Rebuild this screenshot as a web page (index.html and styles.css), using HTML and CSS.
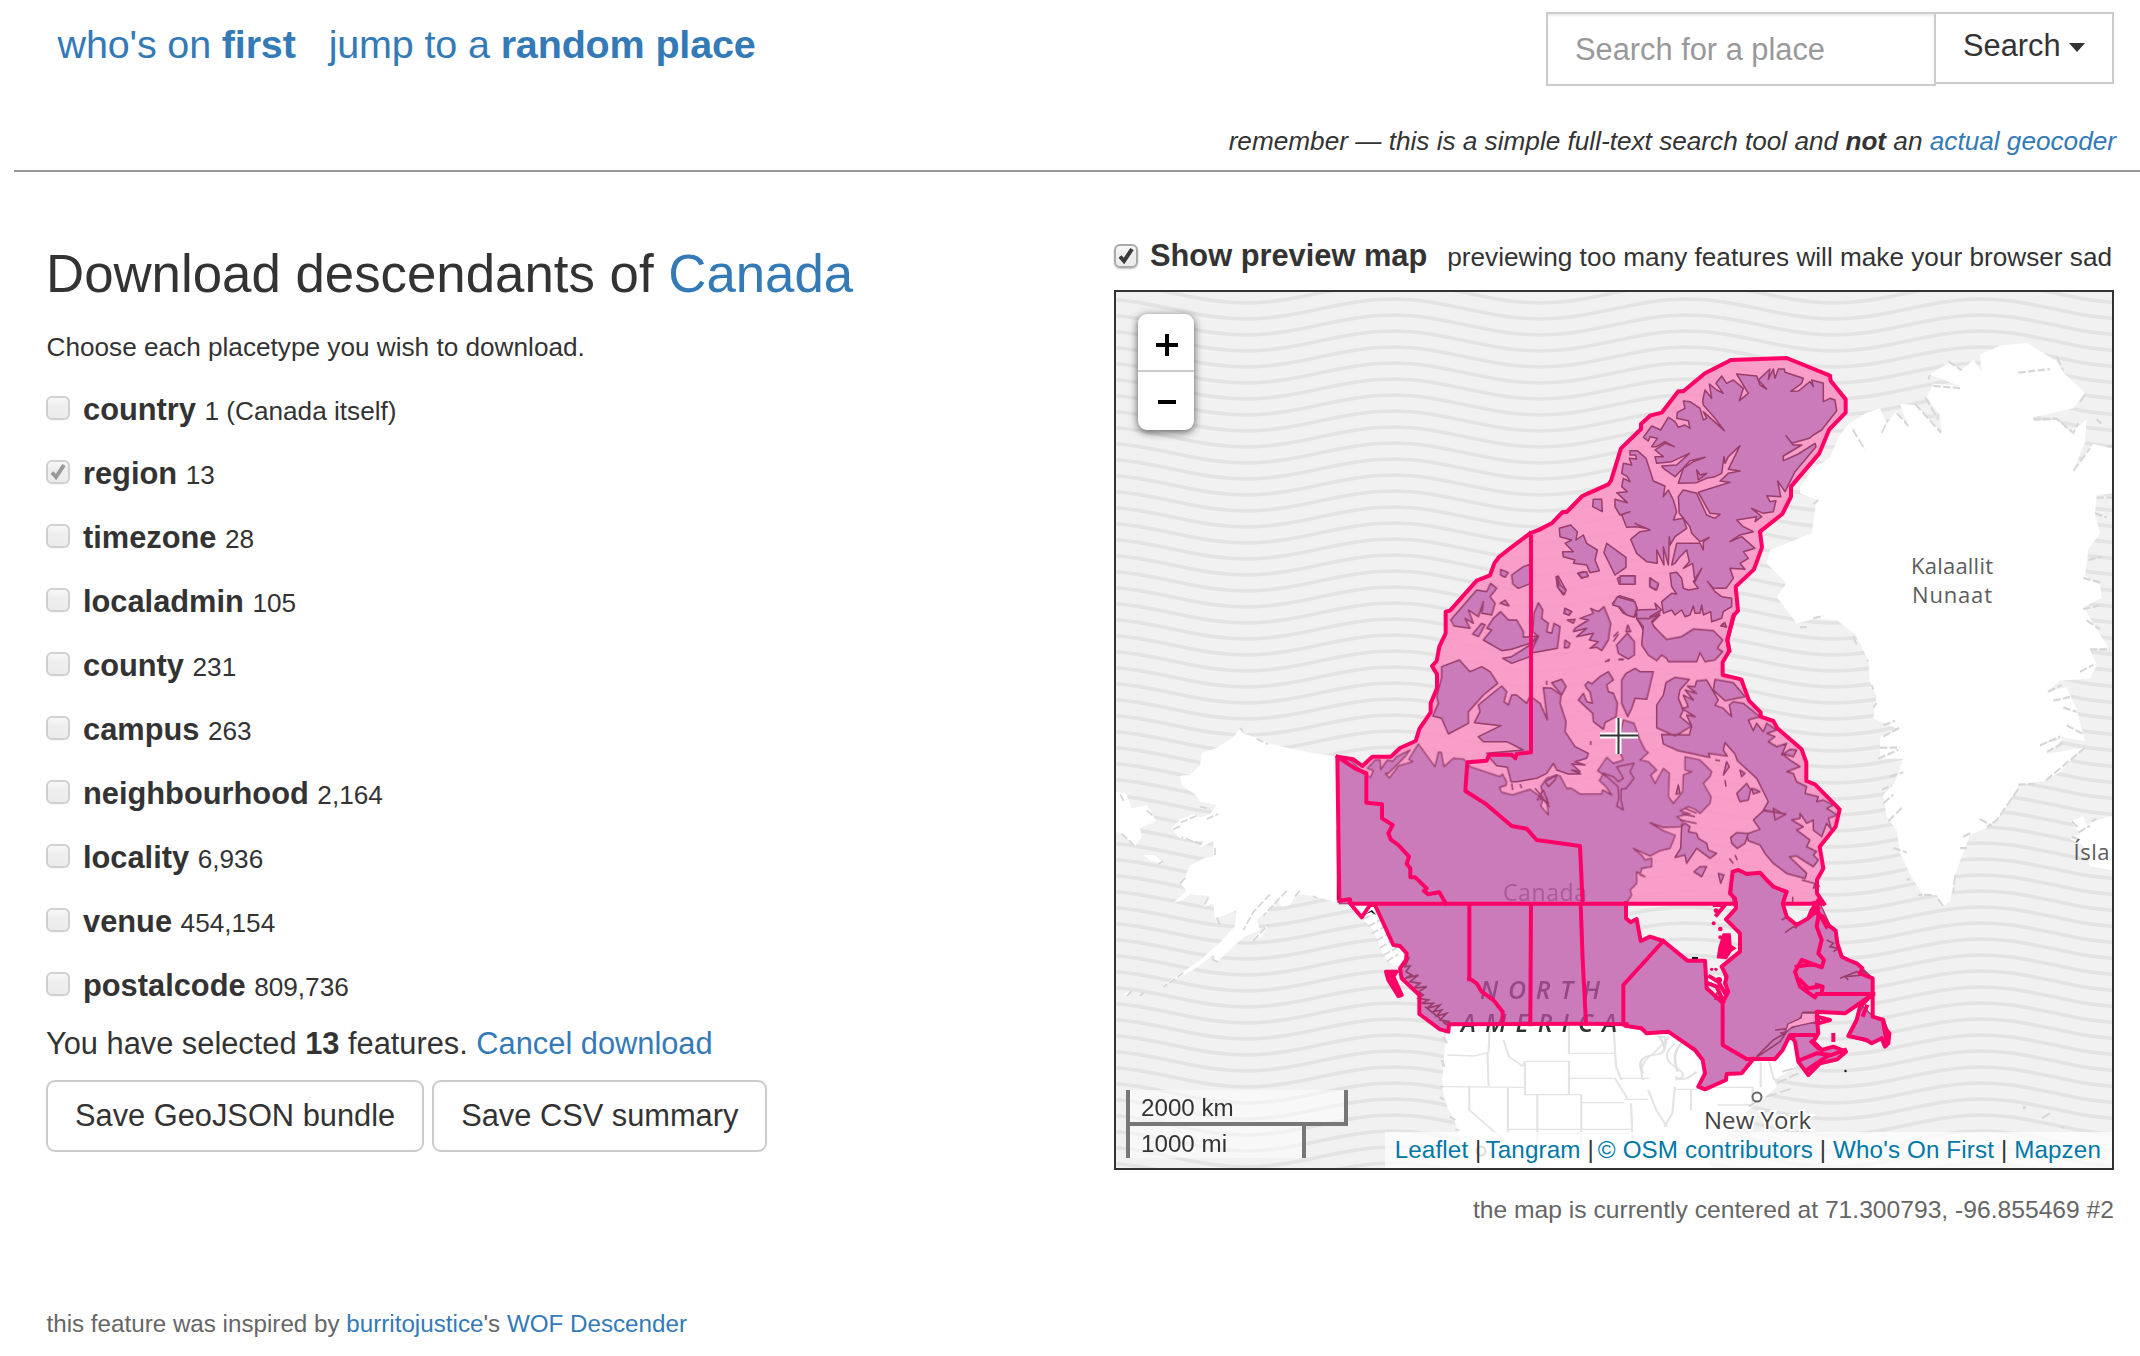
FILE: index.html
```html
<!DOCTYPE html>
<html lang="en">
<head>
<meta charset="utf-8">
<title>Download descendants of Canada</title>
<link rel="stylesheet" href="styles.css">
</head>
<body>
<header class="site-header">
  <nav class="site-nav">
    <a href="#">who's on <strong>first</strong></a>
    <a href="#">jump to a <strong>random place</strong></a>
  </nav>
  <div class="search">
    <form class="search-form">
      <input class="search-input" type="text" placeholder="Search for a place">
      <button class="search-button" type="button">Search<span class="caret"></span></button>
    </form>
    <p class="search-note">remember — this is a simple full-text search tool and <strong>not</strong> an <a href="#">actual geocoder</a></p>
  </div>
</header>

<main class="columns">
  <section class="download">
    <h1>Download descendants of <a href="#">Canada</a></h1>
    <p class="hint">Choose each placetype you wish to download.</p>
    <ul class="placetypes">
      <li><span class="box"></span><label><b>country</b> <small>1 (Canada itself)</small></label></li>
      <li><span class="box checked"><svg viewBox="0 0 24 24"><path d="M6 12.500l4 4.500L18 5"/></svg></span><label><b>region</b> <small>13</small></label></li>
      <li><span class="box"></span><label><b>timezone</b> <small>28</small></label></li>
      <li><span class="box"></span><label><b>localadmin</b> <small>105</small></label></li>
      <li><span class="box"></span><label><b>county</b> <small>231</small></label></li>
      <li><span class="box"></span><label><b>campus</b> <small>263</small></label></li>
      <li><span class="box"></span><label><b>neighbourhood</b> <small>2,164</small></label></li>
      <li><span class="box"></span><label><b>locality</b> <small>6,936</small></label></li>
      <li><span class="box"></span><label><b>venue</b> <small>454,154</small></label></li>
      <li><span class="box"></span><label><b>postalcode</b> <small>809,736</small></label></li>
    </ul>
    <p class="selected">You have selected <strong>13</strong> features. <a href="#">Cancel download</a></p>
    <div class="actions">
      <button class="btn" type="button">Save GeoJSON bundle</button>
      <button class="btn" type="button">Save CSV summary</button>
    </div>
    <p class="credit">this feature was inspired by <a href="#">burritojustice</a>'s <a href="#">WOF Descender</a></p>
  </section>

  <section class="preview">
    <div class="preview-toggle"><span class="box active"><svg viewBox="0 0 24 24"><path d="M6 12.500l4 4.500L18 5"/></svg></span><b>Show preview map</b><small>previewing too many features will make your browser sad</small></div>
    <div class="map">
      <svg class="map-canvas" viewBox="1116 292 996 876" width="996" height="876">
        <defs>
          <pattern id="waves" patternUnits="userSpaceOnUse" x="1099" y="303" width="294" height="16">
            <g fill="none" stroke="#e3e3e3" stroke-width="3.600">
              <path d="M0-36C53-36 94-16 147-16S241-36 294-36"/>
              <path d="M0-20C53-20 94 0 147 0S241-20 294-20"/>
              <path d="M0-4C53-4 94 16 147 16S241-4 294-4"/>
              <path d="M0 12C53 12 94 32 147 32S241 12 294 12"/>
              <path d="M0 28C53 28 94 48 147 48S241 28 294 28"/>
            </g>
          </pattern>
          <g id="mainland">
            <path transform="translate(1330 560) scale(.33333)" d="M22 590L60 598 100 640 122 652 130 632 112 625 135 600 150 600 152 628 172 600 188 604 200 590 240 570 225 590 175 640 166 640 178 654 205 618 248 605 236 598 265 552 315 620 325 577 334 577 342 620 370 595 400 597 412 607 420 620 510 650 517 642 530 665 528 676 508 682 515 697 547 705 600 688 628 708 622 720 640 715 632 738 655 765 650 715 640 705 632 680 650 655 680 645 690 648 710 685 725 685 750 702 815 702 818 690 845 705 828 680 808 662 820 640 850 650 865 665 880 655 860 620 912 610 900 635 912 655 888 685 873 688 873 720 880 750 860 738 866 715 864 680 830 650 803 632 830 592 850 610 880 600 862 560 880 480 912 490 930 540 945 570 955 578 930 600 955 605 980 630 962 645 975 670 1000 625 1018 640 1015 710 1030 730 1058 695 1060 645 1085 635 1065 630 1065 590 1110 600 1145 635 1140 650 1120 670 1143 710 1140 730 1110 760 1095 748 1075 740 1050 752 1080 762 1040 770 1060 785 1052 800 1000 802 960 788 1000 812 1036 826 1020 865 990 872 960 888 910 865 935 885 945 900 965 895 965 920 935 925 930 945 945 950 920 935 920 970 900 990 905 1005 888 1031 28 1031z"/>
            <path transform="translate(1330 860) scale(.33333)" d="M135 130L190 255 210 258 230 280 228 300 210 325 215 355 268 405 268 462 330 508 355 515 357 493 768 491 880 493 922 503 950 520 1015 515 1095 570 1118 600 1125 640 1105 680 1125 688 1188 660 1190 642 1235 640 1270 597 1335 602 1358 570 1375 525 1460 520 1460 455 1545 460 1630 402 1628 355 1597 325 1580 310 1545 298 1528 270 1517 212 1500 195 1470 130 1460 130 1435 175 1400 195 1370 170 1358 130 1365 95 1330 80 1290 38 1250 42 1225 30 1208 35 1205 105 1215 145 1188 178 1230 220 1230 275 1175 320 1190 370 1195 400 1178 428 1130 385 1125 302 1072 302 1000 243 960 230 932 243 920 177 902 187 888 175 888 130z"/>
            <path transform="translate(1600 860) scale(.33333)" d="M575 522L648 522 636 550 665 570 700 560 738 575 712 598 660 610 625 645 595 605 585 545zM748 528L770 470 790 440 820 470 850 475 868 520 860 558 845 535 815 550z"/>
          </g>
        </defs>

        <rect x="1116" y="292" width="996" height="876" fill="#f1f1f1"/>
        <rect x="1116" y="292" width="996" height="876" fill="url(#waves)"/>

        <!-- Alaska and the Bering coast -->
        <g transform="translate(1100 680) scale(.33333 .35714)">
          <path class="land" d="M720 215L640 205 560 190 500 175 480 165 430 150 420 135 400 160 350 190 305 205 300 240 270 265 240 268 245 295 285 320 300 340 350 350 330 375 300 385 280 375 240 390 215 415 235 440 270 450 310 452 300 470 340 450 340 495 310 500 270 520 245 575 260 590 220 625 250 615 270 600 330 605 310 635 340 625 345 670 370 660 410 645 405 690 360 735 300 785 190 855 280 812 340 770 350 790 430 720 480 700 470 670 510 645 530 610 545 635 570 630 590 600 640 605 700 620 760 640 820 700 850 770 880 800 900 800 920 760 840 600z"/>
          <path class="land" d="M40 310L80 320 95 360 140 350 170 395 120 415 125 440 105 465 65 430 50 425 40 440zM130 490L165 490 190 515 150 505zM460 725L505 685 485 720zM70 880L90 870 80 884z"/>
          <path class="coast" d="M430 145l-10-10M470 165l35 15M325 610l-15 25M240 410l-25 10M320 390l35-15M300 355l30 5M510 600l-50 50-30 50M560 590l-70 70M600 590l-20 20M355 790l-20-8M460 730l45-45M250 820l-60 40M350 665l10 20M290 380l-50 20M305 460l-60-20M345 470v20M80 885l20-20M120 885l10-10M60 320l15 25M140 365l25 20M65 430l40 35M175 515l15-8M790 670l40-20M805 690l40-20M815 710l40-20M830 730l35-20M840 750l35-20M850 770l40-20M860 788l35-20M640 605l10 5M240 570l20-20"/>
        </g>
        <!-- Greenland and Iceland -->
        <g transform="translate(1800 290) scale(.33333 .44643)">
          <path class="land" d="M0 440L40 400 90 375 115 330 145 300 200 275 240 265 260 300 290 270 325 305 300 255 350 258 400 300 425 320 420 280 380 240 400 210 480 215 390 190 450 160 480 180 500 170 520 155 545 185 540 145 600 125 680 118 770 160 790 185 855 230 820 265 700 285 705 295 770 290 810 320 860 290 855 340 820 405 880 345 936 355 936 455 890 460 885 500 900 545 865 580 855 640 900 660 905 690 850 710 890 760 925 800 870 805 890 840 870 870 780 875 740 900 800 890 830 940 855 1010 780 1000 715 1020 790 1005 740 1040 850 1025 780 1080 730 1100 655 1110 610 1170 560 1205 510 1220 490 1260 465 1310 450 1370 430 1380 410 1355 370 1355 330 1310 300 1260 290 1210 260 1180 250 1130 280 1110 310 1050 240 1050 240 1000 300 985 220 960 230 910 210 880 205 830 165 770 110 740 50 735 -10 747 -70 687 -40 657 -100 612 -90 582 35 545 50 470 0 455z"/>
          <path class="land" d="M810 1190L850 1178 860 1200 880 1190 936 1178 936 1300 870 1290 850 1245 810 1230 840 1218z"/>
          <path class="coast" d="M158 312L195 358M245 320l20-30M290 275l35 30M345 255l78 65M375 240l40 50M390 190l-5 10M445 160l40 20M400 215l85 5M655 185l95-8M700 290l70-2 50 32 15-22M820 405l50-50M890 465h46M885 500l35 10M865 605l40-8M850 645l50 10M850 715l45-8M860 740l40 20M870 805l60 0M840 855l40-15M745 900l40-15M760 920l60-10M790 935l40 10M720 1020l60-20M740 1035l50-20M800 975l50 20M855 1025l-120 75M655 1108l50-2M655 1118l-65 70-30 15M540 1185l35 15M490 1225l25-10M500 1250l-20 0M465 1310l-5 40M430 1380l-20-20M395 1355l-40 0M320 1320l10 0M280 1250l40 10M265 1190l40-30M250 1150l30-20M245 1120l30-10M270 1090l40-10M235 1050l60-20M240 1025l60 0M250 1000l50-20M250 975l35-10M220 935l10-10M215 885l5 10M200 830l5 0M40 735l30-5M160 775l10 20M0 755h20M55 470l-15 10M890 290l15 10M920 350h15M770 150l20 30M855 235l-20 20M815 1190l20 15M835 1215l35-15M875 1190l15-5M815 1225l20 5"/>
        </g>
        <!-- United States with its state lines -->
        <g transform="translate(1300 1000) scale(.53571 .33333)">
          <path class="land" d="M275 75L268 180 265 262 275 320 288 360 300 420 330 504H770L755 465 800 405 830 340 870 290 890 260 885 240 925 200 940 120 975 60z"/>
          <path class="state" d="M275 165L325 168 350 158 352 258M352 158L354 75M268 260L420 262M316 262V330L388 430M388 262V400M380 120L390 170 415 198 420 184 502 184V284H420V184M502 75V160H588M502 235H588L612 298M420 284H525V388H388M443 284V388M525 308H605M585 75L590 200 600 240M600 235H652M605 298H650M525 388H620L618 310M640 240Q630 190 660 160L690 110M700 130Q670 170 700 200T700 240M650 270L665 330 685 380M700 260L695 340 680 380M698 268H740L775 240M730 270V330M775 262H845V315H780M860 185V262M875 180L885 240M388 430V470H443V388M525 388V470M620 388V460H760M443 400H620"/>
          <path class="coast" d="M268 110l6 20M265 180l4 20M262 260l6 0M262 290l6 10M280 350l10 10M290 390l8 0M838 320l20-20M870 290l50-25M890 250l40-30M900 215l20-10M1352 318v10M1385 355l15-15M1422 380l3 5M860 340l10-5"/>
          <path class="lake" d="M640 220Q625 170 660 165T670 110Q690 110 680 140M705 215Q690 150 720 120T740 170M700 230Q715 250 740 215"/>
        </g>

        <g class="label">
          <text x="1911" y="574" font-size="22" textLength="82">Kalaallit</text>
          <text x="1912" y="603" font-size="22" textLength="80">Nunaat</text>
          <text x="2073.500" y="860" font-size="22" textLength="36">Ísla</text>
          <text class="city" x="1704" y="1129" font-size="24" textLength="107">New York</text>
          <circle cx="1757" cy="1097" r="4.500" fill="#fff" stroke="#666" stroke-width="2"/>
          <circle cx="1481" cy="1151" r="4.500" fill="#fff" stroke="#888" stroke-width="2"/>
        </g>

        <!-- Territorial waters of the three territories -->
        <g class="water">
          <path transform="translate(1330 560) scale(.33333)" d="M22 590L70 598 97 618 127 590H183L210 564 257 543 268 507 302 457V430L321 385V343L306 318 320 303 328 260 347 220V155L360 152 440 62 480 46 493 10 507-9 540-35 600-80 630-92H1100V1031H60L28 1022z"/>
          <path transform="translate(1540 330) scale(.33333)" d="M-30 618L35 580 68 546H80L127 498 205 463 213 452 243 355 303 297V282L330 257 365 248 415 184H430L495 130 573 90 740 84 870 137 872 152 917 208V248L868 298 838 370 753 470V500L727 552 660 605 666 652 642 718 587 770 594 842 580 858 562 930 0 930z"/>
          <path transform="translate(1600 600) scale(.33333)" d="M414 20L412 38 402 45 382 120 388 152 368 187V225L424 238 447 302 482 337V350L520 363 532 385 605 448 619 487V543L645 553 719 628 707 680 659 740 670 805 651 840V880L668 911H0V0z"/>
        </g>

        <use href="#mainland" fill="#fff"/>
        <g class="label">
          <text x="1503" y="901" font-size="23" textLength="84" fill="#777">Canada</text>
          <text class="continent" x="1480" y="999" textLength="120">NORTH</text>
          <text class="continent" x="1461" y="1032" textLength="156">AMERICA</text>
        </g>
        <use href="#mainland" class="provinces"/>

        <!-- Ellesmere, Axel Heiberg, Devon and neighbours -->
        <g class="island" transform="translate(1540 330) scale(.33333)">
          <path d="M488 212L495 180 515 205 508 162 530 180 550 190 528 160 545 138 560 160 580 150 610 175 598 212 625 190 590 132 650 138 660 165 680 177 655 150 690 117 685 148 700 117 705 145 715 117H733L735 127 790 145 785 160 752 184 775 183 810 155 820 170 815 150 850 160V215L870 205 885 210 890 242 845 300 820 315 808 325 755 340 738 317 760 345 785 345 730 378V392L775 372 825 340 828 350 765 425 735 485 713 453 722 500 680 497 690 515 708 512 700 545 670 550 635 535 665 560 645 575 650 560 590 570 610 590 640 605 600 615 570 635 605 620 645 655 610 665 625 685 600 700 615 718 570 715 580 745 558 775 520 775 503 755 525 785 545 800 575 805 575 830 550 845 545 865 515 875 512 845 490 855 485 825 480 850 465 850 460 828 450 855 435 860 425 840 405 855 395 840 370 850 365 815 395 790 410 792 395 770 390 730 410 727 425 745 430 775 445 780 475 775 460 755 485 715 465 755 458 700 430 715 448 695 440 660 420 680 405 700 395 705 410 640 480 640 490 660 490 635 508 622 480 635 455 610 450 590 418 550 415 500 430 480 470 490 500 555 525 565 540 553 510 550 475 487 570 457 540 453 565 430 600 423 565 418 600 347 565 380 555 400 552 380 545 430 525 440 500 445 470 458 415 460 430 415 460 395 495 382 450 392 405 440 370 415 365 408 410 405 448 370 395 395 350 400 345 380 370 380 345 360 375 340 403 350 375 335 350 350 335 350 352 325 330 320 325 333 310 322 335 288 362 300 385 262 405 275 415 292 435 285 450 295 445 272 410 265 412 247 435 235 430 213 450 215 480 235 490 270 500 265 490 245 553 302 525 265 490 225z"/>
          <path d="M270 362L292 362 318 385 340 453 375 468 370 500 385 480 400 510 410 545 400 570 430 565 440 595 405 620 390 645 388 620 385 705 370 650 372 705 350 660 352 700 320 695 290 670 272 628 300 605 330 600 285 580 315 595 290 590 260 592 245 555 270 545 240 555 225 530V508L262 518 230 488 262 485 245 470 250 445 270 455 262 440 245 430 250 400 275 405 268 385 290 387 287 375 270 375z"/>
          <path d="M470 420L480 435 500 430 475 450zM160 508L185 508 187 545 158 530zM58 595L92 585 112 605 108 630 130 615 140 640 172 660 165 690 178 722 150 728 140 705 100 700 105 690 70 680 68 665 100 665 75 640 95 630 60 620zM200 640L258 682V712L225 735 192 668zM113 730L130 725 145 737 125 745zM48 740L55 738 78 780 70 795 52 770zM232 745L250 737H285V763H238zM330 743L355 765 345 780 330 770zM218 820L238 797 280 810 292 835 285 860 250 850 235 830zM290 840L350 838 345 820 365 840 330 860 360 855 335 880 350 900H310L290 865zM550 880L560 890 542 888zM75 835L95 845 88 855 72 850z"/>
        </g>
        <!-- Western Arctic islands -->
        <g class="island" transform="translate(1330 560) scale(.33333)">
          <path d="M512 28L535 38 525 52 512 45zM545 45L580 20 603 12V70L565 85 548 72zM362 180L440 90 470 95 482 70 500 85 480 110 495 130 485 165 455 160 460 125 445 170 415 150 430 190 405 175 420 205 372 198zM455 190L465 195 445 230 428 222zM510 130L525 120 537 138zM460 240L485 210 470 205 490 175 512 155 535 180H560L580 215V232L625 228 600 250 545 268 515 272zM518 295L545 290 600 255 620 230 600 290 545 310zM612 160L625 128 638 150 635 175 655 190 650 215 665 220 672 190 690 200 682 265 655 270 600 280 625 230 608 215zM335 320L388 300 420 335 455 320 480 335 503 370 460 405 415 455V490L355 522 335 475 308 468 325 430 320 410 335 350z"/>
          <path d="M480 595L500 617 532 622 543 665 560 665 620 655 650 640 670 610 680 630 715 642 752 642 725 630 750 635 725 612 765 615 735 605 770 595 775 580 735 560 705 515 708 485 690 430 693 405 665 385 640 383 652 480 630 430 600 408 590 430 560 405 545 405 535 435 522 425 530 395 515 378 445 435 450 455 433 488 513 497 445 530 460 545 530 545 580 570 470 580z"/>
          <path d="M665 368L695 358 708 380 695 405zM705 145L725 155 715 165 703 160zM712 180L735 178 730 190zM705 240L720 250 715 263H703zM735 205L775 180 750 175 790 160 782 145 805 155 822 140 842 190 835 240 815 272 800 262 780 265 805 245 778 240 790 220 740 230 770 205 730 215zM682 50L690 75 708 90 703 103 685 85zM765 375L775 365 785 372 810 350 835 335 850 360 830 375 835 395 850 400 862 430 858 470 825 488 820 508 790 485 788 460 745 420 760 400 770 425 787 430 780 395 770 385zM875 360L888 340 915 325 930 335H970L950 418 915 415 905 445 893 470 875 430zM860 255L892 220 913 245V285L895 297 865 280zM893 195L902 215H888zM862 110L915 125 920 145 912 172 890 165 868 140 848 135zM870 48L915 48V73H870zM960 55L985 70 980 90 960 80zM745 40L770 35 773 50 755 53zM655 730L640 690 628 710zM645 665L680 645 675 660 655 680z"/>
          <path d="M832 305L838 298M868 298L882 298M650 362L650 375M782 543V555M850 245L865 222M640 718L658 740M615 685L640 715M570 672L575 685M545 670L548 690"/>
        </g>
        <!-- Baffin and the Hudson Strait islands -->
        <g class="island" transform="translate(1600 600) scale(.33333)">
          <path d="M110 55L150 55 180 38 155 65 162 80 200 118 245 110 280 87 340 92 368 120 352 145 368 155 345 180 315 185 300 158 290 185H205L200 175 185 165 170 182 145 165 125 135 130 80z"/>
          <path d="M170 315L190 285 198 248 225 232 268 238 240 270 235 295 250 330 240 350 275 378 268 405 185 403 190 432 235 452 330 472 325 460 382 468 370 450 375 428 405 462 412 482 470 535 505 605 490 630 545 640 520 625 525 660 558 642 490 632 460 660 480 688 440 702 445 722 480 735 495 760 520 790 560 820 615 835 620 820 568 770 590 768 640 800 655 780 640 765 650 755 620 740 630 720 590 690 610 680 575 660 600 655 600 640 620 670 640 660 640 690 665 710 680 670 695 690 685 655 712 645 680 625 700 615 670 600 650 605 655 590 615 580 620 560 590 545 580 520 560 515 600 500 570 480 545 460 580 470 590 450 570 448 545 465 560 430 530 440 505 425 525 410 500 400 530 390 500 370 490 395 470 370 460 392 445 360 480 350 430 310 400 305 388 315 395 350 370 325 345 315 355 300 320 240 290 243 285 260 262 258 290 280 255 270 280 300 250 285 265 320 245 325 285 350 260 345 275 378 225 408 170 383zM345 238L400 248 435 290 375 302 340 270z"/>
          <path d="M410 580L440 550 452 570 445 600 420 605zM455 565L470 570 480 575 460 582zM392 712L410 698 445 700 435 730 412 745 395 730zM245 678L242 745 225 772 255 765 260 790 290 745 330 775 350 760 325 750 320 730 295 715 290 700 265 695 270 680 255 670zM282 815L300 800H320L305 830zM355 820L372 825 362 850zM388 775L400 790M405 765L412 780M420 510L435 520 425 530zM380 485L388 500 370 525zM375 540L378 560M235 555L240 580 228 582zM345 480L360 482M15 185L30 178M55 178L70 180M40 110L55 95M605 840L645 850 640 865 660 858M578 890V911M365 75L375 68 378 82zM240 660L290 670M245 640L285 650M255 625L290 640"/>
        </g>
        <!-- Fjords and inlets along the Pacific and Atlantic coasts -->
        <g class="inlet">
          <path transform="translate(1330 860) scale(.33333)" d="M238 290L225 320 240 318 228 335 245 345 225 355 265 345 240 365 270 370 250 385 290 380 265 395 280 405 265 415 295 420 275 430 310 430 290 445 330 435 310 455 335 450 320 468 350 460 330 480 360 485 340 490M285 440L330 475 350 495"/>
          <path transform="translate(1600 860) scale(.33333)" d="M470 590L520 540 555 520 605 470 610 457 650 457M525 510L570 505 620 485 650 490M465 595L540 545 560 515 540 520M555 218L580 200 590 205M545 180L560 172M680 240L700 250 690 260 715 265 700 275M720 355L770 335 790 345 735 350 745 360M780 330L800 340M345 420L350 400 370 410"/>
        </g>
        <path fill="#f99fca" stroke="#993d6b" stroke-width="1.300" d="M1816 1013H1802L1801 1018 1788 1024 1785 1033 1792 1027 1816 1022z"/>

        <!-- Slivers of dark outline showing beside the borders -->
        <g fill="#111">
          <path d="M1336.800 830h1.400v70h-1.400zM1364 915l8-5 4 5-5-3zM1692 957h6v2h-6z"/><circle cx="1845.500" cy="1071" r="1.200"/>
        </g>
        <!-- Region boundaries -->
        <g class="border">
          <path transform="translate(1330 560) scale(.33333)" d="M28 1022L22 590 70 598 97 618 127 590H183L210 564 257 543 268 507 302 457V430L321 385V343L306 318 320 303 328 260 347 220V155L360 152 440 62 480 46 493 10 507-9 540-35 600-80 630-92M22 590L75 625 109 640V728L156 733V775L188 795 175 820 182 838 205 855 237 890 230 912 241 925V952H256L290 985 282 993 295 1003 328 997 348 1031M603-82V577L560 582 556 595 545 584H478L470 602 412 607 406 693 465 730 545 798 590 806 620 840 750 858 758 1031M28 1022L60 1018 62 1031H1218M1365 1031H1478M418 1031V1258M603 1031L601 1393M752 1031L758 1200 768 1391"/>
          <path transform="translate(1540 330) scale(.33333)" d="M0 598L35 580 68 546H80L127 498 205 463 213 452 243 355 303 297V282L330 257 365 248 415 184H430L495 130 573 90 740 84 870 137 872 152 917 208V248L868 298 838 370 753 470V500L727 552 660 605 666 652 642 718 587 770 594 842 580 858 562 930 568 962"/>
          <path transform="translate(1600 600) scale(.33333)" d="M402 45L382 120 388 152 368 187V225L424 238 447 302 482 337V350L520 363 532 385 605 448 619 487V543L645 553 719 628 707 680 659 740 670 805 651 840V880L672 911"/>
          <path transform="translate(1330 860) scale(.33333)" d="M60 130L95 172 120 135 135 135 190 255 210 258 230 280 228 300 210 325 215 355 268 405V462L330 508 355 515 357 493 768 491 890 493M418 355L440 370 455 395 490 420 518 455V490M168 335H200L190 350 215 405 205 408 175 360zM180 340L200 385"/>
          <path transform="translate(1600 860) scale(.33333)" d="M78 130V175L92 187 110 177 122 243 150 230 190 243 262 302H315L320 385 368 428V555L440 597H525L548 570 565 535H580M190 243L70 375V493L78 498 125 505 140 520 205 515 285 570 308 600 315 640 295 680 315 688 378 660 380 642 425 640 460 597M368 428L385 395 375 370 380 350 365 320 420 275V220L378 178 408 145 405 115 390 100 398 35 415 30 440 42 480 38 500 60 520 80 545 90 560 95 548 130 560 170 590 195 625 175 635 150 655 120 650 160 670 170 685 195 707 212 712 250 725 290 745 300 770 310 787 325 780 340 818 355V470L850 480 855 505 868 520 865 550 855 560 845 535 815 550 800 540 745 528 770 480 780 440 815 405 735 460 650 455 655 490 690 480 650 470 655 520 640 545 665 570 700 560 738 575 712 598 660 610 625 645 595 605 585 545 570 525H645M655 170L650 200 665 240 655 280 672 300 665 322 605 300 585 335 600 380 645 412 650 402H820M650 375L668 380 665 400M600 360L625 385 655 380M590 320L620 315 645 315M640 130L680 200M630 170L655 145M325 370L350 380 370 425M330 350L355 365 375 400M345 135H375L350 165M700 540V525M600 600L650 580 690 585M620 630L680 590 735 570M635 545L655 565M850 490L860 545M800 440L790 465"/>
        </g>
        <g fill="#f06" transform="translate(1600 860) scale(.33333)">
          <path d="M355 262L368 220 392 220 395 255 410 265 395 275 380 298 350 295z"/>
          <circle cx="341" cy="190" r="6"/><circle cx="361" cy="207" r="7"/><circle cx="335" cy="328" r="5"/><circle cx="348" cy="328" r="5"/><circle cx="357" cy="360" r="9"/><circle cx="361" cy="232" r="6"/><circle cx="348" cy="152" r="7"/>
        </g>

        <!-- Map centre -->
        <g class="crosshair">
          <path stroke="#fff" stroke-width="6" d="M1600 735.500H1638M1618.500 718V754"/>
          <path stroke="#333" stroke-width="2" d="M1600 735.500H1638M1618.500 718V754"/>
        </g>
      </svg>
      <div class="zoom"><span class="zoom-in"></span><span class="zoom-out"></span></div>
      <div class="scale"><span class="scale-km">2000 km</span><span class="scale-mi">1000 mi</span></div>
      <div class="attribution"><a href="#">Leaflet</a> <i>|</i><a href="#">Tangram</a> <i>|</i><a href="#">© OSM contributors</a> | <a href="#">Who's On First</a> | <a href="#">Mapzen</a></div>
    </div>
    <p class="position">the map is currently centered at 71.300793, -96.855469 #2</p>
  </section>
</main>
</body>
</html>
```

FILE: styles.css
```css
* { box-sizing: border-box; }
body {
  margin: 0;
  color: #333;
  background: #fff;
  font: 30.8px/44px "Liberation Sans", Arial, sans-serif;
  overflow: hidden;
}
a { color: #337ab7; text-decoration: none; }
p, h1, ul { margin: 0; padding: 0; }
small { font-size: 26.18px; }

.site-header {
  display: flex;
  justify-content: space-between;
  height: 172px;
  margin-left: 14px;
  padding: 12px 26px 0 43.5px;
  border-bottom: 2px solid #999;
}
.site-nav {
  display: flex;
  gap: 33px;
  padding-top: 4px;
  font-size: 39.5px;
  letter-spacing: -.15px;
  line-height: 56px;
}
.search-form { display: flex; justify-content: flex-end; align-items: flex-start; }
.search-input {
  width: 390px;
  height: 74px;
  margin-right: -2px;
  padding: 2px 26px 0 27px;
  border: 2px solid #ccc;
  border-radius: 0;
  box-shadow: inset 0 2px 2px rgba(0, 0, 0, .075);
  font: inherit;
}
.search-input::placeholder { color: #999; opacity: 1; }
.search-button {
  display: flex;
  width: 180px;
  height: 72px;
  padding: 0 26px 0 27px;
  border: 2px solid #ccc;
  background: #fff;
  color: #333;
  font: inherit;
  line-height: 63px;
}
.caret {
  margin: 29px 0 0 8px;
  border-top: 9px solid #333;
  border-left: 8px solid transparent;
  border-right: 8px solid transparent;
}
.search-note {
  margin-right: -2px;
  padding-top: 40px;
  font-size: 26.18px;
  font-style: italic;
  line-height: 30px;
  text-align: right;
}

.columns {
  display: grid;
  grid-template-columns: 1fr 1000px;
  padding: 63px 26px 0 46px;
}
h1 {
  padding-top: 10px;
  font-size: 52.8px;
  font-weight: 400;
  line-height: 58px;
}
.hint { margin-top: 26px; padding-left: .5px; font-size: 26.18px; line-height: 36px; }
.placetypes { margin-top: 13px; list-style: none; }
.placetypes li {
  display: flex;
  align-items: center;
  gap: 13px;
  height: 64px;
  line-height: 64px;
}
.box {
  flex: none;
  width: 24px;
  height: 24px;
  border: 2px solid #d0d0d0;
  border-radius: 6px;
  background: linear-gradient(#f8f8f8, #eee 40%, #ececec);
  box-shadow: 0 1px 1px rgba(0, 0, 0, .05);
}
.placetypes .box { margin-top: -5px; }
.box svg { display: block; width: 24px; height: 24px; margin: -2px; overflow: visible; }
.box path { fill: none; stroke: #999; stroke-width: 4; }
.box.active { border-color: #aaa; box-shadow: 0 1px 2px rgba(0, 0, 0, .25); }
.box.active path { stroke: #3a3a3a; }
.selected { margin-top: 4px; }
.actions { display: flex; gap: 8px; margin-top: 14px; }
.btn {
  height: 72px;
  padding: 0 27px;
  border: 2px solid #ccc;
  border-radius: 9px;
  background: #fff;
  color: #333;
  font: inherit;
  line-height: 66px;
  white-space: nowrap;
}
.credit { margin-top: 157px; padding-left: .5px; color: #666; font-size: 24.2px; line-height: 30px; }

.preview-toggle { display: flex; align-items: baseline; height: 55px; padding-top: 1px; line-height: 40px; white-space: nowrap; }
.preview-toggle .box { align-self: flex-start; margin: 8px 12px 0 0; }
.preview-toggle small { margin-left: auto; padding-right: 2px; }
.map {
  position: relative;
  height: 880px;
  border: 2px solid #333;
  overflow: hidden;
  font-size: 24.2px;
}
.map-canvas { display: block; }
.land { fill: #fff; }
.coast, .state, .lake { fill: none; stroke: #d6d6d6; stroke-width: 5; }
.coast { stroke-dasharray: 22 7; }
.state { stroke: #e4e4e4; stroke-width: 4; }
.lake { stroke: #e0e0e0; stroke-width: 5; }
.label { font-family: "Open Sans", "Noto Sans", sans-serif; fill: #5c5c5c; }
.city { stroke: #fff; stroke-width: 4px; paint-order: stroke; fill: #444; }
.continent { font-size: 25px; font-style: italic; font-weight: 600; fill: #333; }
.water { fill: #fb91c3; opacity: .86; }
.provinces { fill: #b94da3; fill-opacity: .75; stroke: #993d6b; stroke-width: 4; stroke-linejoin: round; }
.island { fill: #cb7aba; stroke: #993d6b; stroke-width: 4.5; stroke-linejoin: round; }
.inlet { fill: none; stroke: #993d6b; stroke-width: 5; }
.border { fill: none; stroke: #f06; stroke-width: 12; stroke-linejoin: round; stroke-linecap: square; }
.crosshair { fill: none; }

.zoom {
  position: absolute;
  left: 22px;
  top: 22px;
  width: 56px;
  height: 116px;
  border-radius: 9px;
  background: #fff;
  box-shadow: 0 2px 9px rgba(0, 0, 0, .65);
}
.zoom span { display: block; position: relative; height: 58px; }
.zoom-in { border-bottom: 2px solid #ccc; }
.zoom span::before, .zoom-in::after { content: ""; position: absolute; background: #000; }
.zoom-in::before { left: 18px; top: 29px; width: 22px; height: 4px; }
.zoom-in::after { left: 27px; top: 20px; width: 4px; height: 22px; }
.zoom-out::before { left: 20px; top: 28px; width: 18px; height: 4px; }
.scale {
  position: absolute;
  left: 10px;
  top: 798px;
  width: 222px;
}
.scale span {
  display: block;
  padding-left: 11px;
  border: 4px solid #777;
  border-top: 0;
  background: rgba(255, 255, 255, .5);
}
.scale-km { height: 36px; line-height: 35px; }
.scale .scale-mi { width: 180px; height: 32px; border-bottom: 0; line-height: 35px; }
.attribution {
  position: absolute;
  right: 0;
  bottom: 0;
  height: 36px;
  padding: 0 11px 0 10px;
  background: rgba(255, 255, 255, .7);
  letter-spacing: .13px;
  line-height: 35px;
  white-space: nowrap;
}
.attribution a { color: #0078a8; }
.attribution i { margin-right: 4px; font-style: normal; }
.position { margin-top: 23px; color: #666; font-size: 24.65px; line-height: 34px; text-align: right; }
```
